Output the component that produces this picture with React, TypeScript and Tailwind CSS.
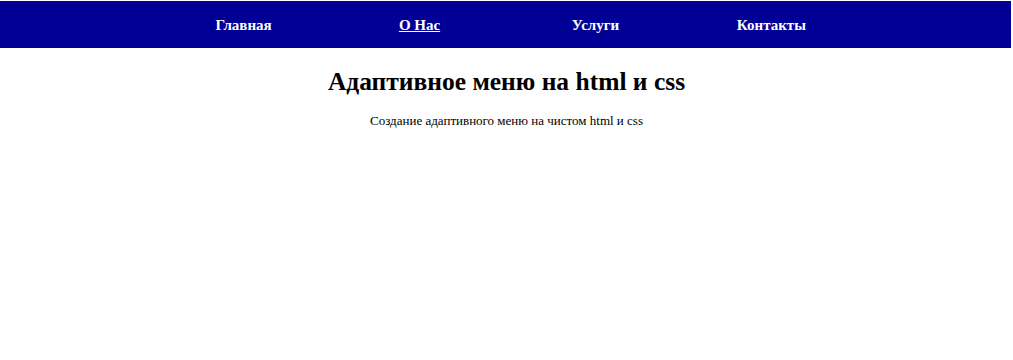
import { useState } from 'react';

const links = ['Главная', 'О Нас', 'Услуги', 'Контакты'];

export default function App() {
  const [active] = useState('О Нас');

  return (
    <div className="min-h-[360px] bg-white font-['Liberation_Serif','Times_New_Roman',serif] text-black">
      {/* Menu */}
      <nav className="mt-px h-[47px] bg-[#000096] mr-[2px]">
        <ul className="mx-auto flex h-full w-[70%] items-center pl-1">
          {links.map((link) => (
            <li key={link} className="flex-1 text-center">
              <a
                href="#"
                className={`text-[15px] font-bold text-white ${active === link ? 'underline' : 'no-underline'}`}
              >
                {link}
              </a>
            </li>
          ))}
        </ul>
      </nav>

      <div className="text-center">
        <h1 className="mt-[15px] text-[25.5px] font-bold leading-normal">Адаптивное меню на html и css</h1>
        <p className="mt-[10px] text-[13px]">Создание адаптивного меню на чистом html и css</p>
      </div>
    </div>
  );
}
